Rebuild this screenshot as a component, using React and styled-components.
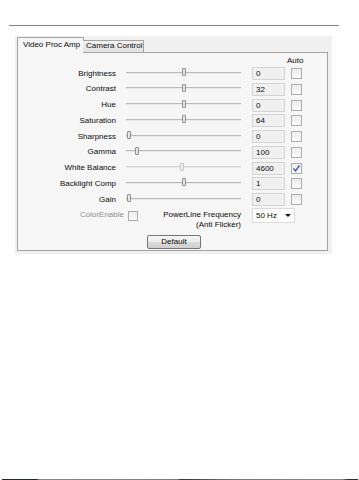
import React from "react";
import styled, { createGlobalStyle } from "styled-components";

const Global = createGlobalStyle`
  html, body { margin: 0; padding: 0; background: #ffffff; }
  body { font-family: "Liberation Sans", Arial, sans-serif; color: #0a0a0a; }
`;

const Page = styled.div`
  width: 359px;
  min-height: 480px;
  display: flex;
  flex-direction: column;
`;

const TopRule = styled.div`
  margin: 25px 0 0 9px;
  width: 330px;
  height: 1px;
  background: #7f8487;
`;

const Panel = styled.div`
  margin: 10px 0 0 15px;
  width: 317px;
  box-sizing: border-box;
  background: #f0f0f0;
  padding: 1px 4px 3px 2px;
  display: flex;
  flex-direction: column;
`;

const TabRow = styled.div`
  display: flex;
  align-items: flex-end;
  height: 15px;
  position: relative;
  z-index: 1;
`;

const Tab = styled.div`
  box-sizing: border-box;
  font-size: 8px;
  line-height: 10px;
  white-space: nowrap;
  border: 1px solid #a3a3a3;
  border-radius: 1px 1px 0 0;
  ${(p) =>
    p.$active
      ? `
    height: 16px;
    margin-bottom: -1px;
    padding: 2px 8px 0 5px;
    background: #f6f6f6;
    border-bottom: none;
    width: 67px;
  `
      : `
    height: 12px;
    padding: 0 3px 0 3px;
    margin-left: -1px;
    background: linear-gradient(#f2f2f2, #e1e1e1);
    border-left: none;
    border-bottom: none;
    width: 61px;
  `}
`;

const Content = styled.div`
  box-sizing: border-box;
  width: 311px;
  border: 1px solid #a3a3a3;
  background: #f6f6f6;
  padding: 3px 0 1px 0;
  display: flex;
  flex-direction: column;
`;

const HeaderRow = styled.div`
  display: flex;
  height: 11px;
  padding-left: 269px;
  font-size: 8px;
  line-height: 9px;
`;

const Rows = styled.div`
  display: flex;
  flex-direction: column;
  gap: 2.75px;
`;

const Row = styled.div`
  display: flex;
  align-items: center;
  height: 13px;
`;

const Label = styled.div`
  width: ${(p) => p.$w || 98}px;
  box-sizing: border-box;
  text-align: right;
  font-size: 8px;
  line-height: 10px;
  white-space: nowrap;
  color: ${(p) => (p.$disabled ? "#8e8e8e" : "#0a0a0a")};
  margin-top: ${(p) => p.$mt || 0}px;
`;

const Slider = styled.div`
  position: relative;
  margin-left: 10px;
  width: 115px;
  height: 13px;
  padding-bottom: 2px;
  box-sizing: border-box;
  display: flex;
  align-items: center;
`;

const Track = styled.div`
  width: 100%;
  height: 2px;
  box-sizing: border-box;
  border-top: 1px solid ${(p) => (p.$faded ? "#d4d4d4" : "#b9b9b9")};
  border-bottom: 1px solid #e9e9e9;
`;

const Thumb = styled.div`
  position: absolute;
  top: 1px;
  width: 4px;
  height: 8px;
  box-sizing: border-box;
  border: 1px solid ${(p) => (p.$faded ? "#c2c2c2" : "#8c8c8c")};
  border-radius: 1px;
  background: ${(p) => (p.$faded ? "#f2f2f2" : "#e6e6e6")};
`;

const ValueBox = styled.div`
  margin-left: 11px;
  width: 33px;
  height: 13px;
  box-sizing: border-box;
  border: 1px solid #d3d3d3;
  background: #f0f0f0;
  font-size: 8px;
  line-height: 11px;
  padding-left: 3px;
`;

const CheckBox = styled.div`
  margin-left: ${(p) => p.$ml ?? 6}px;
  margin-top: ${(p) => p.$mt || 0}px;
  width: ${(p) => p.$size || 11}px;
  height: ${(p) => p.$size || 11}px;
  box-sizing: border-box;
  border: 1px solid #adadad;
  background: linear-gradient(#ececec, #fbfbfb);
  display: flex;
  align-items: center;
  justify-content: center;
  flex-shrink: 0;
`;

const BottomRow = styled.div`
  display: flex;
  align-items: flex-start;
  margin-top: 2px;
`;

const PowerText = styled.div`
  width: 103px;
  text-align: right;
  font-size: 8px;
  line-height: 10px;
  margin-top: 2px;
  white-space: nowrap;
`;

const Dropdown = styled.div`
  margin-left: 11px;
  width: 43px;
  height: 15px;
  box-sizing: border-box;
  border: 1px solid #dcdcdc;
  background: #ffffff;
  display: flex;
  align-items: center;
  justify-content: space-between;
  padding: 0 3px 0 3px;
  font-size: 8px;
`;

const Caret = styled.span`
  width: 0;
  height: 0;
  border-left: 3px solid transparent;
  border-right: 3px solid transparent;
  border-top: 3px solid #111;
`;

const Button = styled.div`
  margin: 5px 0 0 129px;
  width: 54px;
  height: 14px;
  box-sizing: border-box;
  border: 1px solid #767676;
  border-radius: 2px;
  background: linear-gradient(#f4f4f4 0%, #ebebeb 50%, #dbdbdb 51%, #cfcfcf 100%);
  font-size: 8px;
  line-height: 12px;
  text-align: center;
`;

const BottomLine = styled.div`
  margin: auto 1px 0 2px;
  height: 1px;
  background: linear-gradient(
    to right,
    #1d2a1d 0px,
    #1d2a1d 35px,
    #8a8a8a 37px,
    #7c7c7c 176px,
    #2e3a2e 178px,
    #777 230px,
    #8a8a8a 340px,
    #2a332a 346px
  );
`;

const rows = [
  { name: "Brightness", value: "0", pos: 0.5 },
  { name: "Contrast", value: "32", pos: 0.5 },
  { name: "Hue", value: "0", pos: 0.5 },
  { name: "Saturation", value: "64", pos: 0.5 },
  { name: "Sharpness", value: "0", pos: 0.01 },
  { name: "Gamma", value: "100", pos: 0.08 },
  { name: "White Balance", value: "4600", pos: 0.49, auto: true },
  { name: "Backlight Comp", value: "1", pos: 0.5 },
  { name: "Gain", value: "0", pos: 0.01 },
];

const Check = () => (
  <svg width="9" height="9" viewBox="0 0 9 9">
    <path d="M1.5 4.5 L3.5 7 L7.5 1.5" fill="none" stroke="#3b55b5" strokeWidth="1.3" />
  </svg>
);

export default function App() {
  return (
    <Page>
      <Global />
      <TopRule />
      <Panel>
        <TabRow>
          <Tab $active>Video Proc Amp</Tab>
          <Tab>Camera Control</Tab>
        </TabRow>
        <Content>
          <HeaderRow>Auto</HeaderRow>
          <Rows>
            {rows.map((r) => (
              <Row key={r.name}>
                <Label>{r.name}</Label>
                <Slider>
                  <Track $faded={r.auto} />
                  <Thumb $faded={r.auto} style={{ left: `${r.pos * 111}px` }} />
                </Slider>
                <ValueBox>{r.value}</ValueBox>
                <CheckBox>{r.auto ? <Check /> : null}</CheckBox>
              </Row>
            ))}
          </Rows>
          <BottomRow>
            <Label $w={106} $mt={2} $disabled>
              ColorEnable
            </Label>
            <CheckBox $ml={4} $mt={3} $size={10} />
            <PowerText>
              PowerLine Frequency
              <br />
              (Anti Flicker)
            </PowerText>
            <Dropdown>
              <span>50 Hz</span>
              <Caret />
            </Dropdown>
          </BottomRow>
          <Button>Default</Button>
        </Content>
      </Panel>
      <BottomLine />
    </Page>
  );
}
